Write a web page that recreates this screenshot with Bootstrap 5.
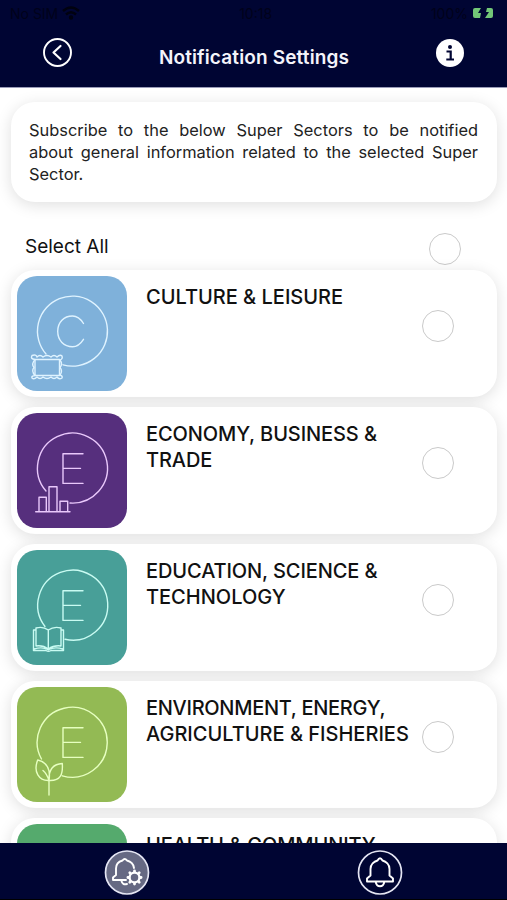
<!DOCTYPE html>
<html lang="en">
<head>
<meta charset="utf-8">
<meta name="viewport" content="width=device-width, initial-scale=1">
<title>Notification Settings</title>
<link href="https://cdn.jsdelivr.net/npm/bootstrap@5.3.0/dist/css/bootstrap.min.css" rel="stylesheet">
<style>
body{font-family:Inter,"Liberation Sans",sans-serif;color:#111;background:#fff}
.app{height:900px}
.topbar{height:88px;background:#000533;border-bottom:1px solid #9a9cb8}
.status{height:26px;font-size:14px;color:#00021a;padding:0 13px 0 10px}
.titlebar{height:53px;padding:0 43px}
.titlebar h1{font-size:19px;font-weight:600;color:#f4f4fb;letter-spacing:.14px;padding-top:11px}
.feed{padding:14px 10px 0 11px}
.panel{background:#fff;border-radius:24px;box-shadow:0 3px 16px rgba(0,0,0,.13)}
.intro{height:100px;padding:17px 19px 0 18px;font-size:16.4px;line-height:22px;color:#222}
.full{display:block;text-align:justify;text-align-last:justify}
.select-all{height:68px;padding:5px 36px 0 14px}
.select-all span{font-size:19px;padding-top:26px}
.select-all .check{margin-top:26px}
.sectors{gap:10px}
.sector{height:127px;padding:6px 43px 0 6px}
.tile{width:110px;height:115px;border-radius:20px;overflow:hidden}
.tile svg{display:block;fill:none;stroke-width:1.4;stroke-linejoin:round;stroke-linecap:round}
.sector h2{font-size:20px;line-height:25.7px;font-weight:500;color:#111;padding:9.4px 0 0 19px;white-space:nowrap}
.snug{letter-spacing:-.1px}
.tight{letter-spacing:-.29px}
.check{width:32px;height:32px;border:1.5px solid #cacaca;border-radius:50%;background:#fff}
.sector .check{margin-top:34px}
.tabs{height:57px;background:#000533;border-bottom:1px solid #000}
.tabs svg{display:block}
</style>
<script src="https://cdn.jsdelivr.net/npm/bootstrap@5.3.0/dist/js/bootstrap.bundle.min.js"></script>
</head>
<body>
<div class="app d-flex flex-column overflow-hidden">
<header class="topbar flex-shrink-0">
  <div class="status d-flex align-items-center justify-content-between">
    <div class="d-flex align-items-center gap-1"><span>No SIM</span>
      <svg width="18" height="14" viewBox="0 0 18 14" fill="none" stroke="#00020f" stroke-width="2.4"><path d="M1 5Q9-2 17 5M4 8.500Q9 4 14 8.500"/><circle cx="9" cy="11.500" r="1"/></svg></div>
    <span>10:18</span>
    <div class="d-flex align-items-center gap-1"><span>100%</span>
      <svg width="22" height="12" viewBox="0 0 22 12"><path fill="#72c777" d="M3 1H9L6 6H9L8 11H3Q1 11 1 9V3Q1 1 3 1ZM15 1H19Q21 1 21 3V9Q21 11 19 11H13L17 5H14Z"/></svg></div>
  </div>
  <div class="titlebar d-flex align-items-center justify-content-between">
    <svg width="29" height="29" viewBox="0 0 29 29" fill="none" stroke="#fff" stroke-linecap="round" stroke-linejoin="round"><circle cx="14.500" cy="14.500" r="13.500" stroke-width="1.900"/><path stroke-width="2.200" d="M17.500 8L10.500 14.500L17.500 21"/></svg>
    <h1 class="m-0">Notification Settings</h1>
    <svg width="28" height="28" viewBox="0 0 28 28"><circle cx="14" cy="14" r="14" fill="#fff"/><circle cx="14" cy="8" r="2" fill="#000533"/><path d="M10.500 12.500H14.700V20M10.300 20.500H18" fill="none" stroke="#000533" stroke-width="2.200"/></svg>
  </div>
</header>
<main class="feed flex-grow-1 overflow-hidden">
  <p class="panel intro m-0"><span class="full">Subscribe to the below Super Sectors to be notified</span> <span class="full">about general information related to the selected Super</span> Sector.</p>
  <div class="select-all d-flex justify-content-between">
    <span>Select All</span><i class="check"></i>
  </div>
  <div class="sectors d-flex flex-column">
    <section class="panel sector d-flex align-items-start">
      <div class="tile" style="background:#7fb1da"><svg width="110" height="115" viewBox="0 0 110 115" stroke="#dff3ff">
        <path d="M29 78A35 35 0 1 1 46 88.800M66.500 47.500C63.500 42.700 60 40 55.500 40C47 40 40.700 46 40.700 55.300C40.700 64.500 47 70.700 55.500 70.700C60 70.700 63.500 68 66.500 63.300"/>
        <path d="M18 83.500H42.500V99.500H18Z"/><path d="M18 83.500Q13 83 15 79.500Q19 78 20 81Q23 78 26 81Q30 78 34 81Q37 78 40 81Q43 78 45 80Q46 83 43 84Q46 88 43 91.500Q46 95 43 99Q46 100 45 102Q42 104 40 101Q37 104 34 101Q30 104 26 101Q23 104 20 101Q17 104 15 102Q14 100 18 99.500Q14 95 17 91.500Q14 88 18 83.500Z"/></svg></div>
      <h2 class="m-0">CULTURE &amp; LEISURE</h2><i class="check ms-auto"></i>
    </section>
    <section class="panel sector d-flex align-items-start">
      <div class="tile" style="background:#562f7d"><svg width="110" height="115" viewBox="0 0 110 115" stroke="#e9c8fb">
        <path d="M29 78A35 35 0 1 1 53 90M66 40.700H46V70.400H66M46 55.400H63.500"/>
        <path d="M18.700 98.800H53M22 98.500V84.300H29.300V98.500M32 98.500V73.700H40V98.500M43 98.500V88.300H50.700V98.500"/></svg></div>
      <h2 class="m-0 snug">ECONOMY, BUSINESS &amp;<br>TRADE</h2><i class="check ms-auto"></i>
    </section>
    <section class="panel sector d-flex align-items-start">
      <div class="tile" style="background:#489f98"><svg width="110" height="115" viewBox="0 0 110 115" stroke="#c9fbf2">
        <path d="M28 76.500A35 35 0 1 1 48 89.300M66 40.700H46V70.400H66M46 55.400H63.500"/>
        <path d="M31.300 80Q26 76 19 78V96Q26 95 31.300 99Q37 95 44 96V78Q37 76 31.300 80V99M19 80H16.500V100.500H29Q31.300 102 34 100.500H46.500V80H44M17 99Q25 96.500 31.300 99.500Q38 96.500 46 99"/></svg></div>
      <h2 class="m-0"><span class="snug">EDUCATION, SCIENCE &amp;</span><br>TECHNOLOGY</h2><i class="check ms-auto"></i>
    </section>
    <section class="panel sector d-flex align-items-start">
      <div class="tile" style="background:#93ba54"><svg width="110" height="115" viewBox="0 0 110 115" stroke="#e6ffc0">
        <path d="M24.500 72A35 35 0 1 1 45.300 88.800M66 40.700H46V70.400H66M46 55.400H63.500"/>
        <path d="M32 108V93.500C22 94 16 85 20.700 73C29 75 34 81 32 93.500C44 94 46 87 45.300 76.500C36 77 31.500 82 32 93.500M32 93.500Q30 87 26 83.500"/></svg></div>
      <h2 class="m-0"><span class="tight">ENVIRONMENT, ENERGY,</span><br>AGRICULTURE &amp; FISHERIES</h2><i class="check ms-auto"></i>
    </section>
    <section class="panel sector d-flex align-items-start">
      <div class="tile" style="background:#55aa6d"></div>
      <h2 class="m-0 snug">HEALTH &amp; COMMUNITY</h2>
    </section>
  </div>
</main>
<nav class="tabs row g-0 flex-shrink-0 position-relative">
  <div class="col-6 d-flex justify-content-center align-items-center pt-1">
    <svg width="46" height="46" viewBox="0 0 46 46" fill="none" stroke="#fff" stroke-width="1.900" stroke-linejoin="round" stroke-linecap="round"><circle cx="23" cy="22.500" r="21.500" fill="#666983" stroke="#e4e5f3" stroke-width="1.700"/>
      <path d="M22 30H9V27.500L12 25V18.500C12 14 15 11.500 18.500 10.500Q20.700 7.500 23 10.500C27 11.500 29.500 14.500 30 18M17.500 31Q18.500 35.300 23 34"/>
      <circle cx="30.500" cy="27.500" r="4.900" stroke-width="2.300"/><path stroke-width="2.800" d="M30.500 21.700V20.900M30.500 33.300V34.100M24.700 27.500H23.900M36.300 27.500H37.100M26.400 23.400L25.800 22.800M34.600 23.400L35.200 22.800M26.400 31.600L25.800 32.200M34.600 31.600L35.200 32.200"/></svg>
  </div>
  <div class="col-6 d-flex justify-content-center align-items-center pt-1">
    <svg width="46" height="46" viewBox="0 0 46 46" fill="none" stroke="#fff" stroke-width="1.900" stroke-linejoin="round"><circle cx="23" cy="22.500" r="21.500" stroke="#e4e5f3" stroke-width="1.700"/>
      <path d="M10 31.500V28.500L13.500 25.500V19C13.500 14.500 17 11.500 20.500 10.500Q23 6 25.500 10.500C29 11.500 32.500 14.500 32.500 19V25.500L36 28.500V31.500ZM18.700 32Q19.500 36.300 23 36.300Q26.500 36.300 27.300 32"/></svg>
  </div>
</nav>
</div>
</body>
</html>
